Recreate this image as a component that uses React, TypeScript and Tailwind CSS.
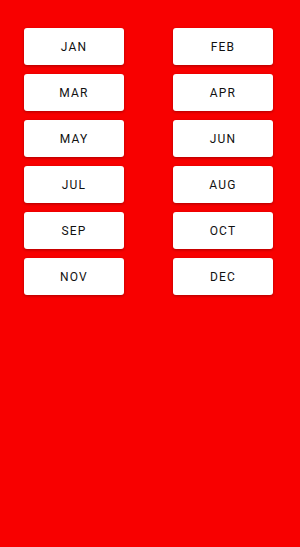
import React from 'react';

const months = ['JAN', 'FEB', 'MAR', 'APR', 'MAY', 'JUN', 'JUL', 'AUG', 'SEP', 'OCT', 'NOV', 'DEC'];

export default function App() {
  return (
    <div className="w-[300px] h-[547px] bg-[#f80000] pt-[28px] pl-[24px] font-['Roboto',sans-serif]">
      <div className="grid grid-cols-[100px_100px] gap-x-[49px] gap-y-[9px]">
        {months.map(m => (
          <button
            key={m}
            className="h-[37px] bg-white rounded-[3px] shadow-[0_1px_3px_rgba(0,0,0,0.3)] text-[12px] font-normal tracking-[0.1em] text-[#111]"
          >
            {m}
          </button>
        ))}
      </div>
    </div>
  );
}
